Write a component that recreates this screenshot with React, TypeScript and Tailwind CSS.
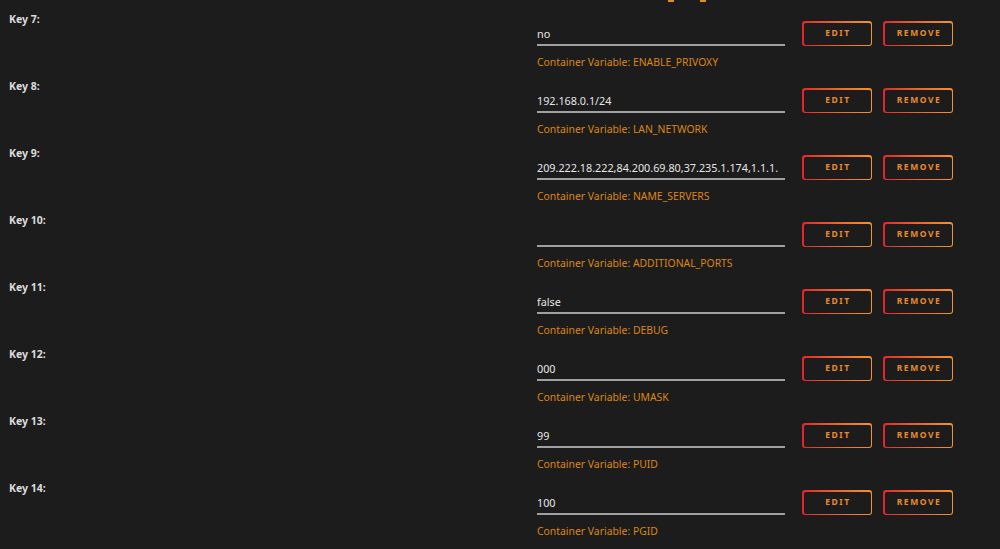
const rows = [
  { key: 7, value: 'no', name: 'ENABLE_PRIVOXY' },
  { key: 8, value: '192.168.0.1/24', name: 'LAN_NETWORK' },
  { key: 9, value: '209.222.18.222,84.200.69.80,37.235.1.174,1.1.1.', name: 'NAME_SERVERS' },
  { key: 10, value: '', name: 'ADDITIONAL_PORTS' },
  { key: 11, value: 'false', name: 'DEBUG' },
  { key: 12, value: '000', name: 'UMASK' },
  { key: 13, value: '99', name: 'PUID' },
  { key: 14, value: '100', name: 'PGID' },
];

function GradButton({ label }: { label: string }) {
  return (
    <div className="rounded-[3px] bg-gradient-to-r from-[#e0242a] to-[#f5922e] p-[1.5px]">
      <div className="flex h-[22px] w-[67px] items-center justify-center rounded-[2px] bg-[#1c1c1c] pl-[2px] text-[8.5px] font-bold tracking-[0.18em] text-[#e88a2c]">
        {label}
      </div>
    </div>
  );
}

export default function App() {
  return (
    <div
      className="min-h-screen w-[1000px] overflow-hidden bg-[#1c1c1c]"
      style={{ fontFamily: '"Noto Sans", "Open Sans", sans-serif' }}
    >
      {/* cut-off heading above */}
      <div className="flex h-[3px] items-start">
        <div className="ml-[668px] h-[2px] w-[6px] bg-[#e88a1c]" />
        <div className="ml-[26px] h-[2px] w-[6px] bg-[#e88a1c]" />
      </div>

      <div className="mt-[10px] flex flex-col">
        {rows.map((r) => (
          <div key={r.key} className="flex h-[67px] items-start">
            <div className="w-[537px] pl-[9px] text-[10.5px] font-bold leading-[13px] text-[#dcdcdc]">
              Key {r.key}:
            </div>
            <div className="mt-[11px] flex w-[248px] flex-col">
              <div className="h-[22px] overflow-hidden whitespace-nowrap border-b-2 border-[#a0a0a0] text-[10.8px] leading-[20px] text-[#e6e6e6]">
                {r.value}
              </div>
              <div className="mt-[9px] text-[10.4px] leading-[14px] text-[#dc8614]">
                Container Variable: {r.name}
              </div>
            </div>
            <div className="ml-[17px] mt-[8px] flex gap-[11px]">
              <GradButton label="EDIT" />
              <GradButton label="REMOVE" />
            </div>
          </div>
        ))}
      </div>
    </div>
  );
}
